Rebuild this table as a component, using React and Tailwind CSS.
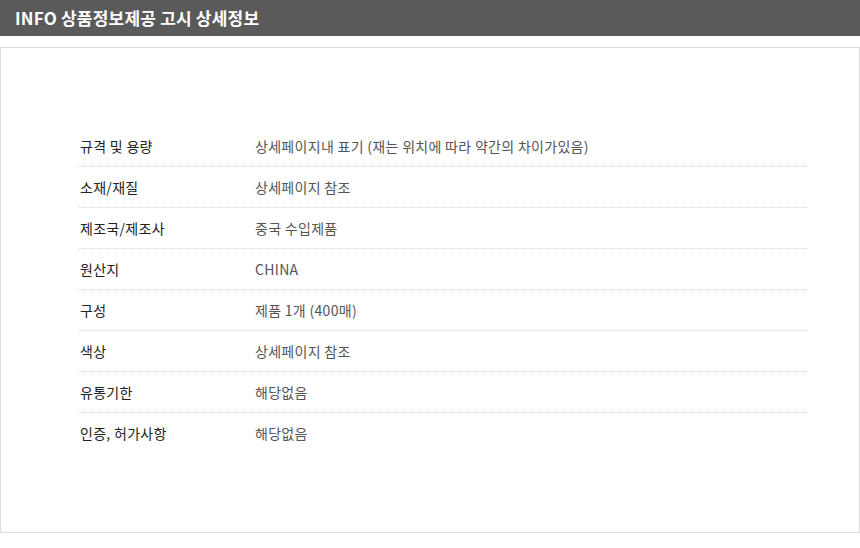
const rows = [
  ["규격 및 용량", "상세페이지내 표기 (재는 위치에 따라 약간의 차이가있음)"],
  ["소재/재질", "상세페이지 참조"],
  ["제조국/제조사", "중국 수입제품"],
  ["원산지", "CHINA"],
  ["구성", "제품 1개 (400매)"],
  ["색상", "상세페이지 참조"],
  ["유통기한", "해당없음"],
  ["인증, 허가사항", "해당없음"],
];

export default function App() {
  return (
    <div
      className="w-[860px] h-[548px] bg-white"
      style={{ fontFamily: '"Noto Sans CJK KR", "Noto Sans", sans-serif' }}
    >
      <div className="h-9 bg-[#5a5a5a] flex items-center px-[15px] text-white text-[17px] font-bold tracking-[0.2px]">
        INFO 상품정보제공 고시 상세정보
      </div>
      <div className="mt-[11px] h-[486px] border border-[#dcdcdc] pt-[78px] pl-[78px]">
        <div className="w-[728px]">
          {rows.map(([label, value], i) => (
            <div
              key={label}
              className={`h-[41px] flex items-center text-[14px] tracking-[0.3px] ${
                i < rows.length - 1 ? "border-b border-dotted border-[#d4d4d4]" : ""
              }`}
            >
              <div className="w-[176px] pl-px text-[#222]">{label}</div>
              <div className="text-[#555]">{value}</div>
            </div>
          ))}
        </div>
      </div>
    </div>
  );
}
